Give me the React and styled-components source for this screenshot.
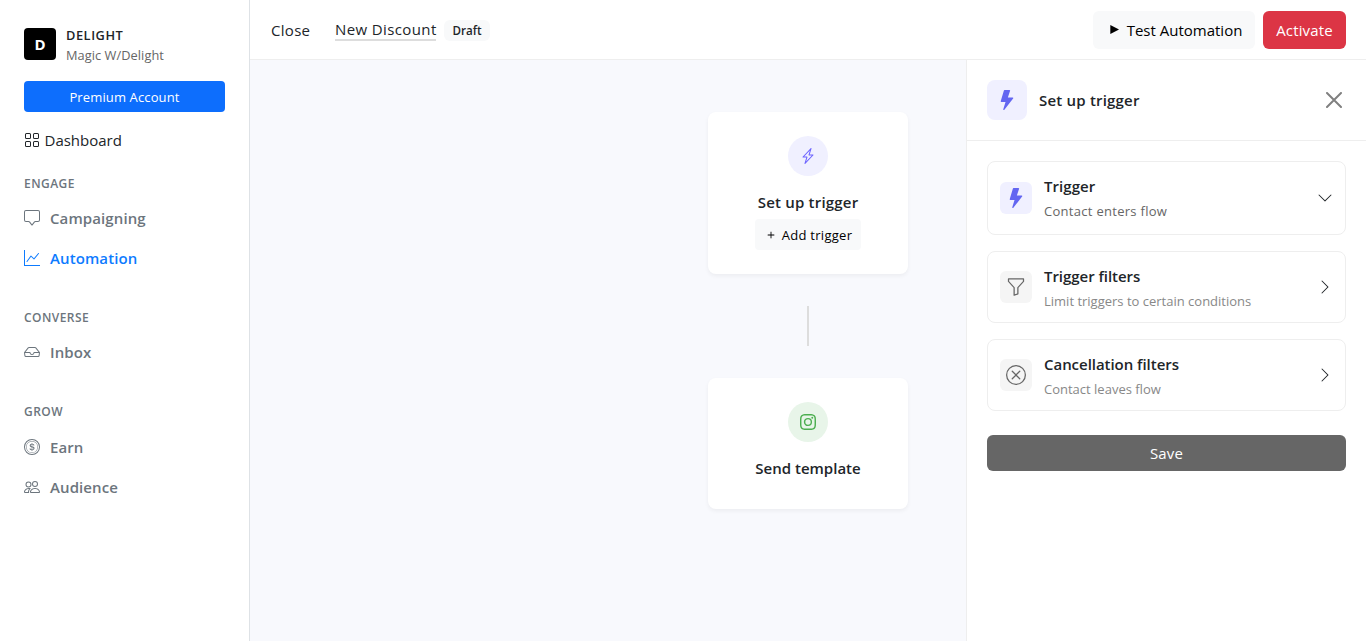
import React from "react";
import styled, { createGlobalStyle, css } from "styled-components";
import {
  BsGrid, BsChatSquare, BsGraphUp, BsInbox, BsCoin, BsPeople, BsLightningCharge,
  BsLightningFill, BsInstagram, BsFunnel, BsXCircle, BsChevronDown,
  BsChevronRight, BsPlus,
} from "react-icons/bs";

const GlobalStyle = createGlobalStyle`
  *, *::before, *::after { box-sizing: border-box; }
  body {
    margin: 0;
    overflow: hidden;
    background: #fff;
    color: #212529;
    font-family: "Open Sans", "Noto Sans", sans-serif;
    font-size: 15px;
    line-height: 24px;
  }
  button { font-family: inherit; border: 0; margin: 0; padding: 0; cursor: pointer; }
  svg { display: block; flex: none; }
`;

const Label = styled.span`
  white-space: nowrap;
  letter-spacing: ${(p) => p.$ls || 0}px;
`;

const Shell = styled.div`
  display: flex;
  height: 641px;
`;

/* Sidebar */
const Sidebar = styled.aside`
  width: 250px;
  flex: none;
  padding: 24px 24px 0;
  background: #fff;
  border-right: 1px solid #dee2e6;
`;
const Brand = styled.div`
  display: flex;
  align-items: center;
  gap: 10px;
  height: 40px;
`;
const Logo = styled.div`
  display: grid;
  place-items: center;
  width: 32px;
  height: 32px;
  border-radius: 4px;
  background: #000;
  color: #fff;
  font-size: 15px;
  font-weight: 700;
`;
const BrandText = styled.div`
  display: flex;
  flex-direction: column;
  padding-top: 1px;
`;
const BrandName = styled(Label)`
  font-size: 12.8px;
  font-weight: 600;
  line-height: 21px;
`;
const BrandSub = styled(Label)`
  font-size: 12.8px;
  line-height: 19px;
  color: #666;
`;
const Premium = styled.button`
  display: block;
  width: 100%;
  height: 31px;
  margin-top: 17px;
  border-radius: 4px;
  background: #0d6efd;
  color: #fff;
  font-size: 13px;
`;
const DashboardLink = styled.a`
  display: flex;
  align-items: center;
  gap: 4.5px;
  height: 24px;
  margin: 16px 0 21.6px;
`;
const Section = styled.section`
  margin-bottom: 29.2px;

  &:nth-of-type(2) {
    margin-bottom: 29.6px;
  }
`;
const SectionTitle = styled.h6`
  margin: 0 0 4.8px;
  font-size: 12px;
  font-weight: 600;
  line-height: 20px;
  color: #6c757d;
`;
const NavItem = styled.a`
  display: flex;
  align-items: center;
  gap: 10px;
  height: 40px;
  font-weight: 600;
  color: ${(p) => (p.$active ? "#0d7bff" : "#6c757d")};
`;

/* Header */
const Main = styled.main`
  position: relative;
  flex: 1;
  display: flex;
  flex-direction: column;
`;
const Header = styled.header`
  display: flex;
  align-items: center;
  height: 60px;
  padding: 0 20px 0 21px;
  border-bottom: 1px solid #eee;
  background: #fff;
`;
const CloseLink = styled(Label)`
  width: 64px;
  padding-top: 1px;
`;
const FlowTitle = styled(Label)`
  width: 101px;
  height: 22px;
  line-height: 21px;
  border-bottom: 2px solid #ddd;
`;
const Badge = styled.span`
  width: 46px;
  height: 21px;
  margin: 1px 0 0 8px;
  border-radius: 6px;
  background: #f8f9fa;
  font-size: 11.6px;
  font-weight: 600;
  line-height: 21px;
  text-align: center;
`;
const Actions = styled.div`
  display: flex;
  gap: 8px;
  margin-left: auto;
`;
const ActionButton = styled.button`
  display: flex;
  align-items: center;
  justify-content: center;
  gap: 8px;
  width: ${(p) => (p.$danger ? 83 : 162)}px;
  height: 38px;
  border-radius: 6px;
  font-size: 15px;
  ${(p) =>
    p.$danger
      ? css`background: #dc3545; color: #fff;`
      : css`padding-left: 4px; background: #f8f9fa; color: #000;`}
`;

/* Canvas */
const Canvas = styled.div`
  flex: 1;
  display: flex;
  flex-direction: column;
  align-items: center;
  padding-top: 52px;
  background: #f8f9fd;
`;
const FlowCard = styled.div`
  display: flex;
  flex-direction: column;
  align-items: center;
  width: 200px;
  height: ${(p) => p.$h}px;
  padding-top: 24px;
  border-radius: 8px;
  background: #fff;
  box-shadow: 0 2px 4px rgba(0, 0, 0, 0.05);
`;
const Circle = styled.div`
  display: grid;
  place-items: center;
  width: 40px;
  height: 40px;
  margin-bottom: 14px;
  border-radius: 50%;
  background: ${(p) => p.$bg};
  color: ${(p) => p.$fg};
`;
const CardTitle = styled(Label)`
  font-weight: 600;
`;
const AddButton = styled.button`
  display: flex;
  align-items: center;
  justify-content: center;
  gap: 4px;
  width: 106px;
  height: 31px;
  margin-top: 5px;
  border-radius: 4px;
  background: #f8f9fa;
  color: #000;
  font-size: 13px;
`;
const Connector = styled.div`
  width: 2px;
  height: 40px;
  margin: 32px 0;
  background: #ddd;
`;

const Panel = styled.aside`
  position: absolute;
  top: 60px;
  right: 0;
  bottom: 0;
  width: 400px;
  background: #fff;
  border-left: 1px solid #eee;
`;
const PanelHeader = styled.div`
  display: flex;
  align-items: center;
  gap: 12px;
  height: 81px;
  padding: 0 24px 0 20px;
  border-bottom: 1px solid #eee;
`;
const PanelTitle = styled(Label)`
  flex: 1;
  font-weight: 600;
`;
const Tile = styled.div`
  display: grid;
  place-items: center;
  flex: none;
  width: ${(p) => p.$size}px;
  height: ${(p) => p.$size}px;
  border-radius: ${(p) => (p.$size > 32 ? 8 : 6)}px;
  background: ${(p) => (p.$accent ? "#f0f0ff" : "#f5f5f5")};
  color: ${(p) => (p.$accent ? "#6366f1" : "#666")};
`;
const PanelBody = styled.div`
  display: flex;
  flex-direction: column;
  gap: 16px;
  padding: 20px;
`;
const Option = styled.div`
  display: flex;
  align-items: center;
  gap: 12px;
  height: ${(p) => p.$h}px;
  padding: 0 12px;
  border: 1px solid #eee;
  border-radius: 8px;
`;
const OptionText = styled.div`
  flex: 1;
  display: flex;
  flex-direction: column;
  height: ${(p) => (p.$open ? 48 : 46)}px;
`;
const OptionTitle = styled(Label)`
  font-weight: 600;
`;
const OptionSub = styled(Label)`
  font-size: 13px;
  line-height: 27px;
  color: ${(p) => (p.$strong ? "#666" : "#888")};
`;
const SaveButton = styled.button`
  height: 36px;
  margin-top: 8px;
  border-radius: 6px;
  background: #666;
  color: #fff;
  font-size: 15px;
`;

const NAV = [
  { title: "ENGAGE", items: [
    { text: "Campaigning", Icon: BsChatSquare },
    { text: "Automation", Icon: BsGraphUp, active: true },
  ] },
  { title: "CONVERSE", items: [{ text: "Inbox", Icon: BsInbox }] },
  { title: "GROW", items: [
    { text: "Earn", Icon: BsCoin },
    { text: "Audience", Icon: BsPeople },
  ] },
];

const OPTIONS = [
  { title: "Trigger", sub: "Contact enters flow", Icon: BsLightningFill, accent: true, h: 74, Arrow: BsChevronDown },
  { title: "Trigger filters", sub: "Limit triggers to certain conditions", Icon: BsFunnel, h: 72, Arrow: BsChevronRight },
  { title: "Cancellation filters", sub: "Contact leaves flow", Icon: BsXCircle, h: 72, Arrow: BsChevronRight },
];

export default function App() {
  return (
    <Shell>
      <GlobalStyle />
      <Sidebar>
        <Brand>
          <Logo>D</Logo>
          <BrandText>
            <BrandName $ls={0.55}>DELIGHT</BrandName>
            <BrandSub $ls={0.06}>Magic W/Delight</BrandSub>
          </BrandText>
        </Brand>
        <Premium><Label $ls={0.13}>Premium Account</Label></Premium>
        <DashboardLink>
          <BsGrid size={16} />
          <Label>Dashboard</Label>
        </DashboardLink>
        {NAV.map(({ title, items }) => (
          <Section key={title}>
            <SectionTitle><Label $ls={0.45}>{title}</Label></SectionTitle>
            {items.map(({ text, Icon, active }) => (
              <NavItem key={text} $active={active}>
                <Icon size={16} />
                <Label $ls={0.1}>{text}</Label>
              </NavItem>
            ))}
          </Section>
        ))}
      </Sidebar>
      <Main>
        <Header>
          <CloseLink $ls={0.3}>Close</CloseLink>
          <FlowTitle $ls={0.39}>New Discount</FlowTitle>
          <Badge><Label>Draft</Label></Badge>
          <Actions>
            <ActionButton>
              <svg width="9" height="9" viewBox="0 0 9 9"><path d="M0.3 0L9 4.5L0.3 9Z" fill="currentColor" /></svg>
              <Label>Test Automation</Label>
            </ActionButton>
            <ActionButton $danger><Label $ls={0.15}>Activate</Label></ActionButton>
          </Actions>
        </Header>
        <Canvas>
          <FlowCard $h={162}>
            <Circle $bg="#f0f0ff" $fg="#6c63ff"><BsLightningCharge size={16} /></Circle>
            <CardTitle $ls={0.2}>Set up trigger</CardTitle>
            <AddButton><BsPlus size={14} /><Label $ls={0.27}>Add trigger</Label></AddButton>
          </FlowCard>
          <Connector />
          <FlowCard $h={131}>
            <Circle $bg="#e8f5e9" $fg="#4caf50"><BsInstagram size={16} /></Circle>
            <CardTitle>Send template</CardTitle>
          </FlowCard>
        </Canvas>
        <Panel>
          <PanelHeader>
            <Tile $size={40} $accent><BsLightningFill size={20} /></Tile>
            <PanelTitle $ls={0.2}>Set up trigger</PanelTitle>
            <svg width="16" height="16" viewBox="0 0 16 16" stroke="#808080" strokeWidth="2" strokeLinecap="round">
              <path d="M1 1L15 15M15 1L1 15" />
            </svg>
          </PanelHeader>
          <PanelBody>
            {OPTIONS.map(({ title, sub, Icon, accent, h, Arrow }) => (
              <Option key={title} $h={h}>
                <Tile $size={32} $accent={accent}><Icon size={20} /></Tile>
                <OptionText $open={accent}>
                  <OptionTitle $ls={accent ? 0.05 : -0.04}>{title}</OptionTitle>
                  <OptionSub $strong={accent} $ls={accent ? 0.29 : 0}>{sub}</OptionSub>
                </OptionText>
                <Arrow size={16} />
              </Option>
            ))}
            <SaveButton><Label $ls={0.1}>Save</Label></SaveButton>
          </PanelBody>
        </Panel>
      </Main>
    </Shell>
  );
}
